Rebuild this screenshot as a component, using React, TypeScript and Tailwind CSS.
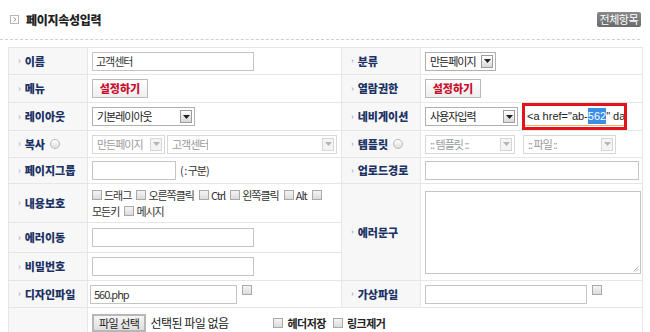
import React from "react";

const FONT = { fontFamily: '"Noto Sans CJK KR", "Noto Sans", sans-serif' };

function Arrow({ disabled }: { disabled?: boolean }) {
  return (
    <span
      className={`flex h-[13px] w-[12px] items-center justify-center border ${
        disabled ? "border-[#d6d6d6] bg-[#f4f4f4]" : "border-[#9c9c9c] bg-gradient-to-b from-white to-[#d9d9d9]"
      }`}
    >
      <svg width="7" height="4" viewBox="0 0 7 4">
        <path d="M0 0h7L3.5 4z" fill={disabled ? "#b5b5b5" : "#222"} />
      </svg>
    </span>
  );
}

function Select({ text, w, disabled }: { text: string; w: string; disabled?: boolean }) {
  return (
    <div
      className={`inline-flex h-[19px] items-center justify-between border bg-white pl-[4px] pr-[2px] ${w} ${
        disabled ? "border-[#d8d8d8] text-[#9a9a9a]" : "border-[#b0b0b0] text-[#222]"
      }`}
    >
      <span className="truncate">{text}</span>
      <Arrow disabled={disabled} />
    </div>
  );
}

function Input({ w, value }: { w: string; value?: string }) {
  return (
    <div className={`flex h-[19px] items-center border border-[#c4c4c4] bg-white pl-[3px] text-[#333] ${w}`}>
      {value}
    </div>
  );
}

function Check() {
  return <span className="inline-block h-[10px] w-[10px] shrink-0 border border-[#a9a9a9] bg-gradient-to-b from-[#f4f4f4] to-[#dcdcdc]" />;
}

function Radio() {
  return <span className="ml-[5px] inline-block h-[10px] w-[10px] rounded-full border border-[#b8b8b8] bg-gradient-to-b from-white to-[#dedede]" />;
}

function SetBtn() {
  return (
    <div className="inline-flex h-[19px] w-[56px] items-center justify-center border border-[#b9b9b9] bg-gradient-to-b from-white to-[#eeeeee] text-[11px] font-black tracking-[0px] text-[#c8102e]">
      설정하기
    </div>
  );
}

function Label({ children, radio, ...rest }: { children: React.ReactNode; radio?: boolean; rowSpan?: number }) {
  return (
    <td {...rest} className="border border-[#e6e6e6] bg-[#f7f7f7] pl-[9px] align-middle">
      <div className="flex items-center text-[11px] font-black tracking-[0px] text-[#1c3264]">
        <span className="mr-[4px] text-[9px] font-normal text-[#8aa0bf]">›</span>
        {children}
        {radio && <Radio />}
      </div>
    </td>
  );
}

function Cell({ children, colSpan }: { children?: React.ReactNode; colSpan?: number }) {
  return (
    <td colSpan={colSpan} className="border border-[#e6e6e6] bg-white pl-[4px] align-middle">
      {children}
    </td>
  );
}

function CheckItem({ text }: { text: string }) {
  return (
    <span className="inline-flex items-center gap-[2px]">
      <Check />
      <span>{text}</span>
    </span>
  );
}

export default function App() {
  return (
    <div className="h-[332px] w-[650px] overflow-hidden bg-white" style={FONT}>
      {/* title bar */}
      <div className="flex h-[39px] items-center justify-between pl-[10px] pr-[9px]">
        <div className="flex items-center gap-[7px]">
          <span className="flex h-[9px] w-[9px] items-center justify-center border border-[#b5b5b5] bg-white">
            <svg width="4" height="5" viewBox="0 0 4 5">
              <path d="M0.5 0.5L3 2.5L0.5 4.5" stroke="#888" fill="none" strokeWidth="0.9" />
            </svg>
          </span>
          <span className="text-[12px] font-black tracking-[-0.3px] text-[#222]">페이지속성입력</span>
        </div>
        <div className="mt-[-1px] flex h-[15px] items-center rounded-[2px] bg-gradient-to-b from-[#8a8a8a] to-[#6a6a6a] px-[3px] text-[11px] tracking-[-0.5px] text-white">
          전체항목
        </div>
      </div>
      <div className="mr-[10px] border-t border-dashed border-[#cfcfcf]" />

      <div className="pl-[8px] pt-[7px]">
        <table className="w-[634px] table-fixed border-collapse text-[11px] tracking-[-1px] text-[#333]">
          <colgroup>
            <col className="w-[79px]" />
            <col className="w-[254px]" />
            <col className="w-[79px]" />
            <col className="w-[222px]" />
          </colgroup>
          <tbody>
            <tr className="h-[27px]">
              <Label>이름</Label>
              <Cell>
                <Input w="w-[162px]" value="고객센터" />
              </Cell>
              <Label>분류</Label>
              <Cell>
                <Select text="만든페이지" w="w-[71px]" />
              </Cell>
            </tr>
            <tr className="h-[28px]">
              <Label>메뉴</Label>
              <Cell>
                <SetBtn />
              </Cell>
              <Label>열람권한</Label>
              <Cell>
                <SetBtn />
              </Cell>
            </tr>
            <tr className="h-[27px]">
              <Label>레이아웃</Label>
              <Cell>
                <Select text="기본레이아웃" w="w-[103px]" />
              </Cell>
              <Label>네비게이션</Label>
              <Cell>
                <div className="flex items-center gap-[4px]">
                  <Select text="사용자입력" w="w-[93px]" />
                  <div className="flex h-[27px] w-[105px] items-center border-[3px] border-[#e2141b] bg-white">
                    <div className="flex h-[19px] w-full items-center overflow-hidden whitespace-nowrap border-b border-[#f0b070] pl-[2px] tracking-[0px] text-[#222]" style={{ fontFamily: '"Liberation Sans", sans-serif' }}>
                      &lt;a href="ab-<span className="bg-[#3a8ee6] text-white">562</span>" dat
                    </div>
                  </div>
                </div>
              </Cell>
            </tr>
            <tr className="h-[27px]">
              <Label radio>복사</Label>
              <Cell>
                <div className="flex items-center gap-[2px]">
                  <Select text="만든페이지" w="w-[73px]" disabled />
                  <Select text="고객센터" w="w-[170px]" disabled />
                </div>
              </Cell>
              <Label radio>템플릿</Label>
              <Cell>
                <div className="flex items-center gap-[8px]">
                  <Select text=":: 템플릿 ::" w="w-[90px]" disabled />
                  <Select text=":: 파일 ::" w="w-[93px]" disabled />
                </div>
              </Cell>
            </tr>
            <tr className="h-[26px]">
              <Label>페이지그룹</Label>
              <Cell>
                <div className="flex items-center gap-[4px]">
                  <Input w="w-[84px]" />
                  <span>( : 구분)</span>
                </div>
              </Cell>
              <Label>업로드경로</Label>
              <Cell>
                <Input w="w-[214px]" />
              </Cell>
            </tr>
            <tr className="h-[39px]">
              <Label>내용보호</Label>
              <Cell>
                <div className="flex w-[240px] flex-wrap items-center gap-x-[5px] gap-y-[3px] leading-[13px]">
                  <CheckItem text="드래그" />
                  <CheckItem text="오른쪽클릭" />
                  <CheckItem text="Ctrl" />
                  <CheckItem text="왼쪽클릭" />
                  <CheckItem text="Alt" />
                  <Check />
                  <span>모든키</span>
                  <CheckItem text="메시지" />
                </div>
              </Cell>
              <Label rowSpan={3}>에러문구</Label>
              <td rowSpan={3} className="border border-[#e6e6e6] bg-white pl-[4px] align-middle">
                <div className="relative h-[83px] w-[216px] border border-[#c4c4c4] bg-white">
                  <svg className="absolute bottom-[1px] right-[1px]" width="6" height="6" viewBox="0 0 6 6">
                    <path d="M5.5 0.5L0.5 5.5M5.5 3L3 5.5" stroke="#999" strokeWidth="0.8" />
                  </svg>
                </div>
              </td>
            </tr>
            <tr className="h-[30px]">
              <Label>에러이동</Label>
              <Cell>
                <Input w="w-[162px]" />
              </Cell>
            </tr>
            <tr className="h-[28px]">
              <Label>비밀번호</Label>
              <Cell>
                <Input w="w-[162px]" />
              </Cell>
            </tr>
            <tr className="h-[27px]">
              <Label>디자인파일</Label>
              <td className="border border-[#e6e6e6] bg-white pl-[2px] align-middle">
                <div className="flex items-start gap-[5px]">
                  <Input w="w-[147px]" value="560.php" />
                  <Check />
                </div>
              </td>
              <Label>가상파일</Label>
              <Cell>
                <div className="flex items-start gap-[5px]">
                  <Input w="w-[162px]" />
                  <Check />
                </div>
              </Cell>
            </tr>
            <tr className="h-[40px]">
              <td className="border border-[#e6e6e6] bg-[#f7f7f7]" />
              <td colSpan={3} className="border border-[#e6e6e6] bg-white pl-[4px] pt-[6px] align-top">
                <div className="flex items-center text-[12px] tracking-[-0.5px] text-[#222]">
                  <span className="flex h-[18px] items-center border-2 border-[#b7b7b7] bg-gradient-to-b from-[#f6f6f6] to-[#dedede] px-[5px] text-[11px]">
                    파일 선택
                  </span>
                  <span className="ml-[4px] w-[123px]">선택된 파일 없음</span>
                  <span className="inline-flex items-center gap-[4px]">
                    <Check />
                    <span className="text-[11px] font-bold">헤더저장</span>
                  </span>
                  <span className="ml-[7px] inline-flex items-center gap-[4px]">
                    <Check />
                    <span className="text-[11px] font-bold">링크제거</span>
                  </span>
                </div>
                <div className="mt-[1px] h-[20px] w-[545px] border border-[#dadada]" />
              </td>
            </tr>
          </tbody>
        </table>
      </div>
    </div>
  );
}
